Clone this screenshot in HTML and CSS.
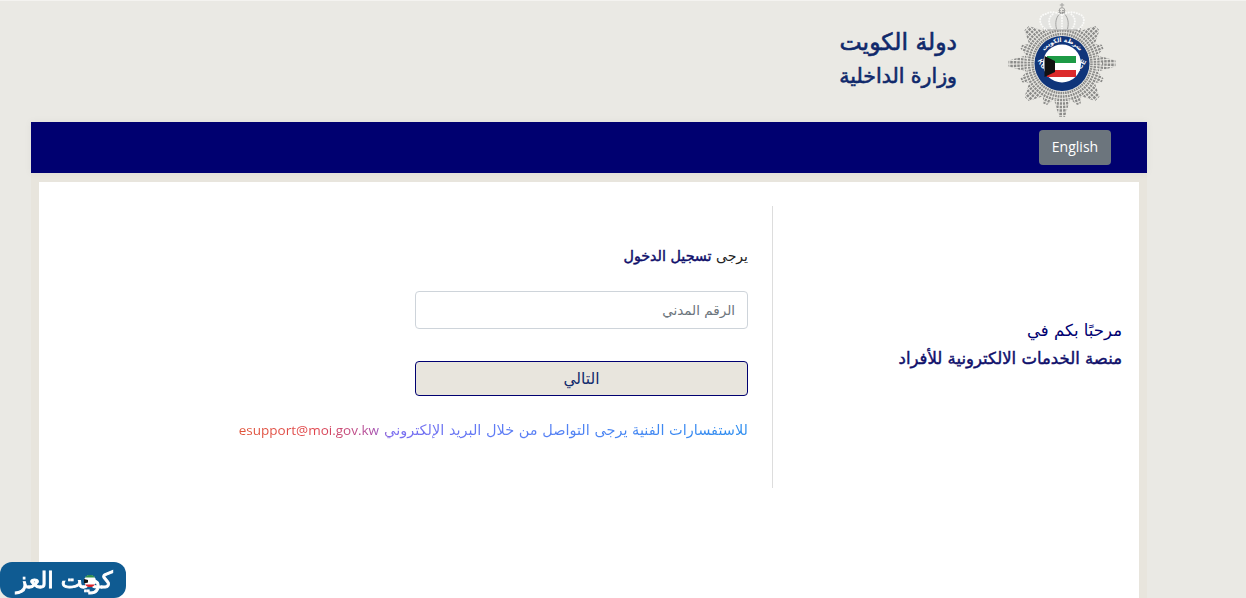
FILE: index.html
```html
<!DOCTYPE html>
<html lang="ar" dir="rtl">
<head>
<meta charset="utf-8">
<title>وزارة الداخلية</title>
<link rel="stylesheet" href="styles.css">
</head>
<body>
<div class="page">
  <header class="masthead">
    <svg class="crest" viewBox="0 0 110 118" width="110" height="118" aria-label="Kuwait Police">
      <defs>
        <clipPath id="star">
          <circle cx="55" cy="62.5" r="36"/>
          <polygon transform="translate(55 62.500)" points="-3,-53.500 3,-53.500 8,-36 -8,-36"/>
          <polygon transform="translate(55 62.500) rotate(90)" points="-3,-53.500 3,-53.500 8,-36 -8,-36"/>
          <polygon transform="translate(55 62.500) rotate(180)" points="-3,-53.500 3,-53.500 8,-36 -8,-36"/>
          <polygon transform="translate(55 62.500) rotate(270)" points="-3,-53.500 3,-53.500 8,-36 -8,-36"/>
          <polygon transform="translate(55 62.500) rotate(45)" points="-3,-50 3,-50 11,-34 -11,-34"/>
          <polygon transform="translate(55 62.500) rotate(135)" points="-3,-50 3,-50 11,-34 -11,-34"/>
          <polygon transform="translate(55 62.500) rotate(225)" points="-3,-50 3,-50 11,-34 -11,-34"/>
          <polygon transform="translate(55 62.500) rotate(315)" points="-3,-50 3,-50 11,-34 -11,-34"/>
          <polygon transform="translate(55 62.500) rotate(22.500)" points="-2,-44 2,-44 7,-34 -7,-34"/>
          <polygon transform="translate(55 62.500) rotate(67.500)" points="-2,-44 2,-44 7,-34 -7,-34"/>
          <polygon transform="translate(55 62.500) rotate(112.500)" points="-2,-44 2,-44 7,-34 -7,-34"/>
          <polygon transform="translate(55 62.500) rotate(157.500)" points="-2,-44 2,-44 7,-34 -7,-34"/>
          <polygon transform="translate(55 62.500) rotate(202.500)" points="-2,-44 2,-44 7,-34 -7,-34"/>
          <polygon transform="translate(55 62.500) rotate(247.500)" points="-2,-44 2,-44 7,-34 -7,-34"/>
          <polygon transform="translate(55 62.500) rotate(292.500)" points="-2,-44 2,-44 7,-34 -7,-34"/>
          <polygon transform="translate(55 62.500) rotate(337.500)" points="-2,-44 2,-44 7,-34 -7,-34"/>
        </clipPath>
        <path id="topArc" d="M33.500 62.500 A21.500 21.500 0 0 1 76.500 62.500"/>
        <path id="botArc" d="M29.500 56 A26.200 26.200 0 0 0 80.500 56"/>
      </defs>
      <g clip-path="url(#star)" class="rings">
        <circle cx="55" cy="62.5" r="29.500" pathLength="360"/>
        <circle cx="55" cy="62.5" r="33" pathLength="360"/>
        <circle cx="55" cy="62.5" r="36.500" pathLength="360"/>
        <circle cx="55" cy="62.5" r="40" pathLength="360"/>
        <circle cx="55" cy="62.5" r="43.500" pathLength="360"/>
        <circle cx="55" cy="62.5" r="47" pathLength="360"/>
        <circle cx="55" cy="62.5" r="50.500" pathLength="360"/>
        <circle cx="55" cy="62.5" r="54" pathLength="360"/>
      </g>
      <g class="crown-fill">
        <path d="M40 29 C31 24 31 14 39 13 C43 10 50 11 55 14 C60 11 67 10 71 13 C79 14 79 24 70 29 Z"/>
      </g>
      <g class="crown-pearls">
        <path d="M40 29 C31 24 31 14 39 13 C43 10 50 11 55 14 C60 11 67 10 71 13 C79 14 79 24 70 29"/>
        <path d="M45 28 C40 21 42 15 47 12.500 M65 28 C70 21 68 15 63 12.500 M55 28 V14"/>
      </g>
      <g class="crown-line">
        <path d="M40 29 H70"/>
        <path d="M49.500 28 C48 22 49 17 52 13.500 M60.500 28 C62 22 61 17 58 13.500"/>
        <circle cx="55" cy="9.500" r="2.800"/>
        <path d="M55 2 V6.700 M52.800 4 H57.200"/>
      </g>
      <circle cx="55" cy="62.5" r="27.500" class="ring"/>
      <circle cx="55" cy="62.5" r="19" class="ring-in"/>
      <text class="crest-ar"><textPath href="#topArc" startOffset="50%">شرطة الكويت</textPath></text>
      <text class="crest-en"><textPath href="#botArc" startOffset="50%">KUWAIT POLICE</textPath></text>
      <rect x="40" y="55" width="29" height="7" fill="#1d9a45"/>
      <rect x="40" y="62" width="29" height="7" fill="#ffffff"/>
      <rect x="40" y="69" width="29" height="7" fill="#dc2a2a"/>
      <polygon points="37.500,55 48,60 48,71 37.500,76" fill="#111111"/>
    </svg>
    <div class="ministry">
      <div class="m1">دولة الكويت</div>
      <div class="m2">وزارة الداخلية</div>
    </div>
  </header>
  <nav class="navbar">
    <button class="lang" type="button" dir="ltr">English</button>
  </nav>
  <div class="shell">
    <main class="card">
      <aside class="welcome">
        <p class="welcome-line">مرحبًا بكم في</p>
        <p class="welcome-strong">منصة الخدمات الالكترونية للأفراد</p>
      </aside>
      <section class="login">
        <p class="prompt">يرجى <b>تسجيل الدخول</b></p>
        <input class="civil" type="text" placeholder="الرقم المدني">
        <button class="next" type="button">التالي</button>
        <p class="support"><span class="support-ar">للاستفسارات الفنية يرجى التواصل من خلال البريد الإلكتروني</span> <span class="support-mail">esupport@moi.gov.kw</span></p>
      </section>
    </main>
  </div>
</div>
<a class="brand" dir="rtl">
  <span class="brand-text">كويت العز</span>
  <svg class="brand-dot" viewBox="0 0 12 12" width="12" height="12" aria-hidden="true">
    <circle cx="6" cy="6" r="6" fill="#fff"/>
    <path d="M1 2.500 A6 6 0 0 1 11 2.500 Z" fill="#2f8f4a"/>
    <path d="M1 9.500 A6 6 0 0 0 11 9.500 Z" fill="#d8232a"/>
    <path d="M0 4 L4 5 V7.500 L0 8.500 Z" fill="#111"/>
  </svg>
</a>
</body>
</html>
```
FILE: styles.css
```css
* { box-sizing: border-box; }
html, body { height: 100%; }
body {
  margin: 0;
  overflow: hidden;
  background: #eae9e4;
  font-family: "DejaVu Sans", sans-serif;
  color: #000070;
}
.page {
  height: 100vh;
  display: flex;
  flex-direction: column;
  border-top: 1px solid #f4f3f0;
}
.masthead {
  height: 121px;
  flex: none;
  display: flex;
  align-items: flex-start;
  gap: 50px;
  padding-right: 129px;
}
.crest { flex: none; }
.ministry {
  padding-top: 24px;
  color: #10296b;
  -webkit-text-stroke: .6px #10296b;
}
.m1 { font-size: 23.5px; line-height: 35px; }
.m2 { font-size: 20.5px; line-height: 33px; }
.navbar {
  flex: none;
  height: 51px;
  margin: 0 99px 0 31px;
  padding: 8px 36px;
  background: #000070;
  display: flex;
  align-items: flex-start;
  box-shadow: 0 0 8px rgba(0, 0, 0, .05);
  position: relative;
}
.lang {
  width: 72px;
  height: 35px;
  border: 0;
  border-radius: 4px;
  padding: 0 0 2px;
  background: #6c757d;
  color: #fff;
  font: 14px/20px "Open Sans", sans-serif;
}
.shell {
  flex: 1;
  margin: 0 99px 0 31px;
  padding: 9px 8px 0;
  background: #e8e5dd;
  display: flex;
}
.card {
  flex: 1;
  background: #fff;
  padding-top: 24px;
  display: flex;
  align-items: flex-start;
}
.welcome {
  width: 366px;
  height: 282px;
  flex: none;
  padding: 0 17px 5px;
  display: flex;
  flex-direction: column;
  justify-content: center;
}
.welcome-line { margin: 0 0 4px; font-size: 16.5px; line-height: 24px; }
.welcome-strong { margin: 0; font-size: 16.5px; line-height: 24px; color: #10106b; -webkit-text-stroke: .45px #10106b; white-space: nowrap; }
.login {
  flex: 1;
  height: 282px;
  border-right: 1px solid #ddd;
  padding: 39px 24px 0 0;
  display: flex;
  flex-direction: column;
  align-items: flex-start;
}
.prompt { margin: 0 0 23px; font-size: 14px; line-height: 23px; color: #222; }
.prompt b { font-weight: 400; font-size: 14.3px; color: #10106b; -webkit-text-stroke: .45px #10106b; }
.civil {
  width: 333px;
  height: 38px;
  padding: 0 12px;
  border: 1px solid #ced4da;
  border-radius: 4px;
  background: #fff;
  font: 13.5px "DejaVu Sans", sans-serif;
  margin-bottom: 32px;
}
.civil::placeholder { color: #6c757d; opacity: 1; }
.next {
  width: 333px;
  height: 35px;
  border: 1px solid #000070;
  border-radius: 4px;
  background: #e8e5dd;
  color: #10296b;
  font: 15.5px "DejaVu Sans", sans-serif;
  margin-bottom: 23px;
}
.support {
  margin: 0;
  line-height: 21px;
  width: max-content;
  white-space: nowrap;
  background: linear-gradient(270deg, #2f8ff0 0%, #5f7cf5 50%, #7a6cf0 70%, #b04ca0 74%, #e0434a 85%, #e0553a 100%);
  -webkit-background-clip: text;
  background-clip: text;
  color: transparent;
}
.support-ar { font-size: 14.5px; }
.support-mail { font: 13.5px "Open Sans", sans-serif; }
.rings circle {
  fill: none;
  stroke: #8b8b89;
  stroke-width: 2.5;
  stroke-dasharray: 3.1 1.4;
}
.crown-fill path { fill: #e4e4e1; }
.crown-pearls path {
  fill: none;
  stroke: #fafaf8;
  stroke-width: 2;
  stroke-linecap: round;
  stroke-dasharray: .1 2.6;
}
.crown-line path, .crown-line circle {
  fill: none;
  stroke: #a3a3a1;
  stroke-width: 1;
}
.ring { fill: #10357a; }
.ring-in { fill: #fff; }
.crest-ar { font: 700 6px "DejaVu Sans", sans-serif; fill: #fff; text-anchor: middle; }
.crest-en { font: 700 7.2px "Liberation Sans", sans-serif; fill: #fff; text-anchor: middle; letter-spacing: .4px; direction: ltr; }
.brand {
  position: fixed;
  left: 0;
  bottom: 0;
  width: 126px;
  height: 36px;
  padding-left: 3px;
  border-radius: 12px;
  background: #0f5b92;
  color: #fff;
  display: flex;
  align-items: center;
  justify-content: center;
}
.brand-text { font-size: 23px; line-height: 36px; -webkit-text-stroke: .9px #fff; }
.brand-dot { position: absolute; left: 84px; top: 13px; }
```
